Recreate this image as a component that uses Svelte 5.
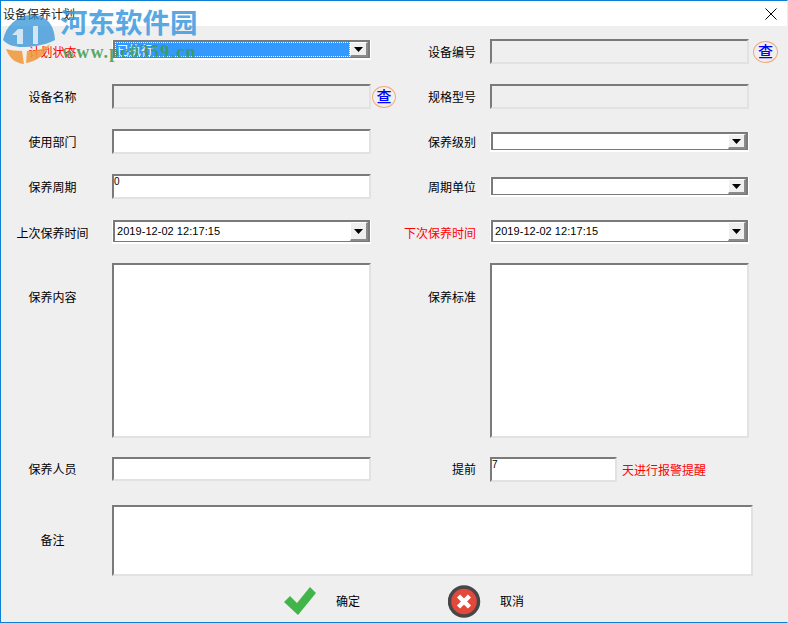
<script>
	const stamp = '查';
	const dateValue = '2019-12-02 12:17:15';
</script>

{#snippet arrow()}
	<span class="arrow"><svg width="9" height="5" viewBox="0 0 9 5"><path d="M0 0h9L4.5 5z" fill="#000" /></svg></span>
{/snippet}

<div class="window">
	<header class="titlebar">
		<span>设备保养计划</span>
		<svg class="close" width="12" height="12" viewBox="0 0 12 12">
			<path d="M.5.5l11 11M11.5.5l-11 11" stroke="#000" fill="none" />
		</svg>
	</header>

	<div class="form">
		<div class="label left red">计划状态</div>
		<div class="select s-first">
			<span class="value selected">已执行</span>
			{@render arrow()}
		</div>
		<div class="label right">设备编号</div>
		<div class="with-icon">
			<div class="field disabled"></div>
			<span class="lookup wide">{stamp}</span>
		</div>

		<div class="label left">设备名称</div>
		<div class="with-icon">
			<div class="field disabled"></div>
			<span class="lookup">{stamp}</span>
		</div>
		<div class="label right">规格型号</div>
		<div class="field disabled"></div>

		<div class="label left">使用部门</div>
		<div class="field"></div>
		<div class="label right">保养级别</div>
		<div class="select s-plain">
			<span class="value"></span>
			{@render arrow()}
		</div>

		<div class="label left">保养周期</div>
		<div class="field"><span class="mini">0</span></div>
		<div class="label right">周期单位</div>
		<div class="select s-plain">
			<span class="value"></span>
			{@render arrow()}
		</div>

		<div class="label left">上次保养时间</div>
		<div class="select s-date">
			<span class="value date">{dateValue}</span>
			{@render arrow()}
		</div>
		<div class="label right red">下次保养时间</div>
		<div class="select s-date">
			<span class="value date">{dateValue}</span>
			{@render arrow()}
		</div>

		<div class="label left tall">保养内容</div>
		<div class="field area"></div>
		<div class="label right tall">保养标准</div>
		<div class="field area"></div>

		<div class="label left person">保养人员</div>
		<div class="field short"></div>
		<div class="label right person">提前</div>
		<div class="advance">
			<div class="field days"><span class="mini">7</span></div>
			<span class="red">天进行报警提醒</span>
		</div>

		<div class="label left notes-label">备注</div>
		<div class="field notes"></div>
	</div>

	<footer class="actions">
		<div class="action">
			<svg width="34" height="30" viewBox="0 0 34 30">
				<path d="M1 16l6-6 7 7L27 1l6 6-18 22z" fill="#41b549" />
			</svg>
			<span>确定</span>
		</div>
		<div class="action">
			<svg width="33" height="33" viewBox="0 0 33 33">
				<circle cx="16" cy="16.5" r="14.5" fill="#e2493a" stroke="#47474a" stroke-width="3.5" />
				<path d="M10.5 11l11 11M21.5 11l-11 11" stroke="#fff" stroke-width="4.5" fill="none" />
			</svg>
			<span>取消</span>
		</div>
	</footer>

	<div class="watermark">
		<svg class="wm-logo" width="60" height="52" viewBox="0 0 60 52">
			<path d="M3 26C6 12 16 2 30 1c14-1 24 7 25 25-11 6-25 7-33 7-8 0-14-2-19-7z" fill="#2b8fd6" opacity=".72" />
			<path d="M12 21l6-6h5v15h-6V21z" fill="#fff" opacity=".7" />
			<path d="M33 12h5v18h-5z" fill="#fff" opacity=".7" />
			<path d="M6 35c4 1 10 2 16 2l2 13C14 49 9 43 6 35z" fill="#f09a3e" opacity=".88" />
			<path d="M27 37c9 0 17-2 23-7-4 10-14 18-24 19z" fill="#f09a3e" opacity=".88" />
		</svg>
		<div class="wm-name">河东软件园</div>
		<div class="wm-url">www.pc0359.cn</div>
	</div>
</div>

<style>
	:global(body) {
		margin: 0;
	}

	.window {
		position: relative;
		box-sizing: border-box;
		width: 788px;
		height: 623px;
		overflow: hidden;
		background: #efefef;
		border: 1px solid #0f7fd6;
		border-right-color: #efefef;
		font: 12px/16px "Noto Sans CJK SC", "Liberation Sans", sans-serif;
		color: #000;
	}

	.titlebar {
		display: flex;
		align-items: center;
		justify-content: space-between;
		height: 25px;
		padding: 0 10px 0 2px;
		background: #fff;
		color: #222;
	}

	.form {
		display: grid;
		grid-template-columns: 111px 259px 119px 297px;
		grid-template-rows: 45px 45px 45px 46px 43px 194px 48px 71px;
		align-items: start;
		padding-top: 13px;
	}

	.label {
		height: 25px;
		line-height: 25px;
		white-space: nowrap;
	}

	.person {
		line-height: 24px;
	}

	.left {
		padding-right: 8px;
		text-align: center;
	}

	.right {
		padding-right: 14px;
		text-align: right;
	}

	.red {
		color: #f00;
	}

	.tall {
		height: 68px;
		line-height: 68px;
	}

	.notes-label {
		height: 71px;
		line-height: 69px;
	}

	.field {
		box-sizing: border-box;
		width: 259px;
		height: 25px;
		flex: none;
		background: #fff;
		border-style: solid;
		border-width: 2px;
		border-color: #7a7a7a #e2e2e2 #e2e2e2 #7a7a7a;
	}

	.disabled {
		background: #efefef;
	}

	.area {
		height: 175px;
	}

	.short {
		height: 24px;
	}

	.notes {
		grid-column: 2 / 5;
		width: 641px;
		height: 71px;
	}

	.mini {
		display: block;
		font: 10px/12px "Liberation Sans", sans-serif;
	}

	.with-icon,
	.advance {
		display: flex;
		align-items: flex-start;
	}

	.lookup {
		box-sizing: border-box;
		width: 24px;
		height: 22px;
		flex: none;
		margin: 2px 0 0 1px;
		border: 1.5px solid #f5a777;
		border-radius: 50%;
		color: #00f;
		font-size: 15px;
		font-weight: 500;
		line-height: 18px;
		text-align: center;
	}

	.wide {
		width: 25px;
		margin-left: 4px;
	}

	.advance {
		align-items: center;
		gap: 5px;
	}

	.days {
		width: 127px;
	}

	.select {
		box-sizing: border-box;
		display: flex;
		align-items: stretch;
		width: 257px;
		margin-left: 1px;
		background: #fff;
		border: 2px solid #7a7a7a;
		border-bottom-width: 1px;
		box-shadow: 0 1px 0 1px #fff;
	}

	.s-first {
		height: 18px;
		margin-top: 1px;
	}

	.s-plain {
		height: 18px;
		margin-top: 3px;
	}

	.s-date {
		height: 22px;
	}

	.value {
		flex: 1;
		padding-left: 2px;
		line-height: 15px;
	}

	.selected {
		background: #3399ff;
		color: #fff;
		outline: 1px dotted #fff;
		outline-offset: -1px;
	}

	.date {
		font: 11px/18px "Liberation Sans", sans-serif;
		letter-spacing: 0.05px;
	}

	.arrow {
		display: flex;
		align-items: center;
		justify-content: center;
		width: 15px;
		background: #efefef;
		border-style: solid;
		border-width: 1px 2px 2px 1px;
		border-color: #fff #8a8a8a #8a8a8a #fff;
	}

	.actions {
		display: flex;
		gap: 88px;
		padding: 9px 0 0 282px;
	}

	.action {
		display: flex;
		align-items: center;
		gap: 19px;
		height: 32px;
	}

	.watermark {
		position: absolute;
		left: -1px;
		top: -1px;
		width: 210px;
		height: 70px;
		pointer-events: none;
	}

	.wm-logo {
		position: absolute;
		left: 0;
		top: 14px;
	}

	.wm-name {
		position: absolute;
		left: 60px;
		top: 5px;
		font: bold 27.5px/38px "Liberation Serif", "Noto Sans CJK SC", serif;
		color: #3c9ae0;
		opacity: 0.85;
		white-space: nowrap;
	}

	.wm-url {
		position: absolute;
		left: 62px;
		top: 42px;
		font: bold 18px/20px "Liberation Serif", serif;
		letter-spacing: 1.2px;
		color: #3f9a4c;
		opacity: 0.85;
		white-space: nowrap;
	}
</style>
